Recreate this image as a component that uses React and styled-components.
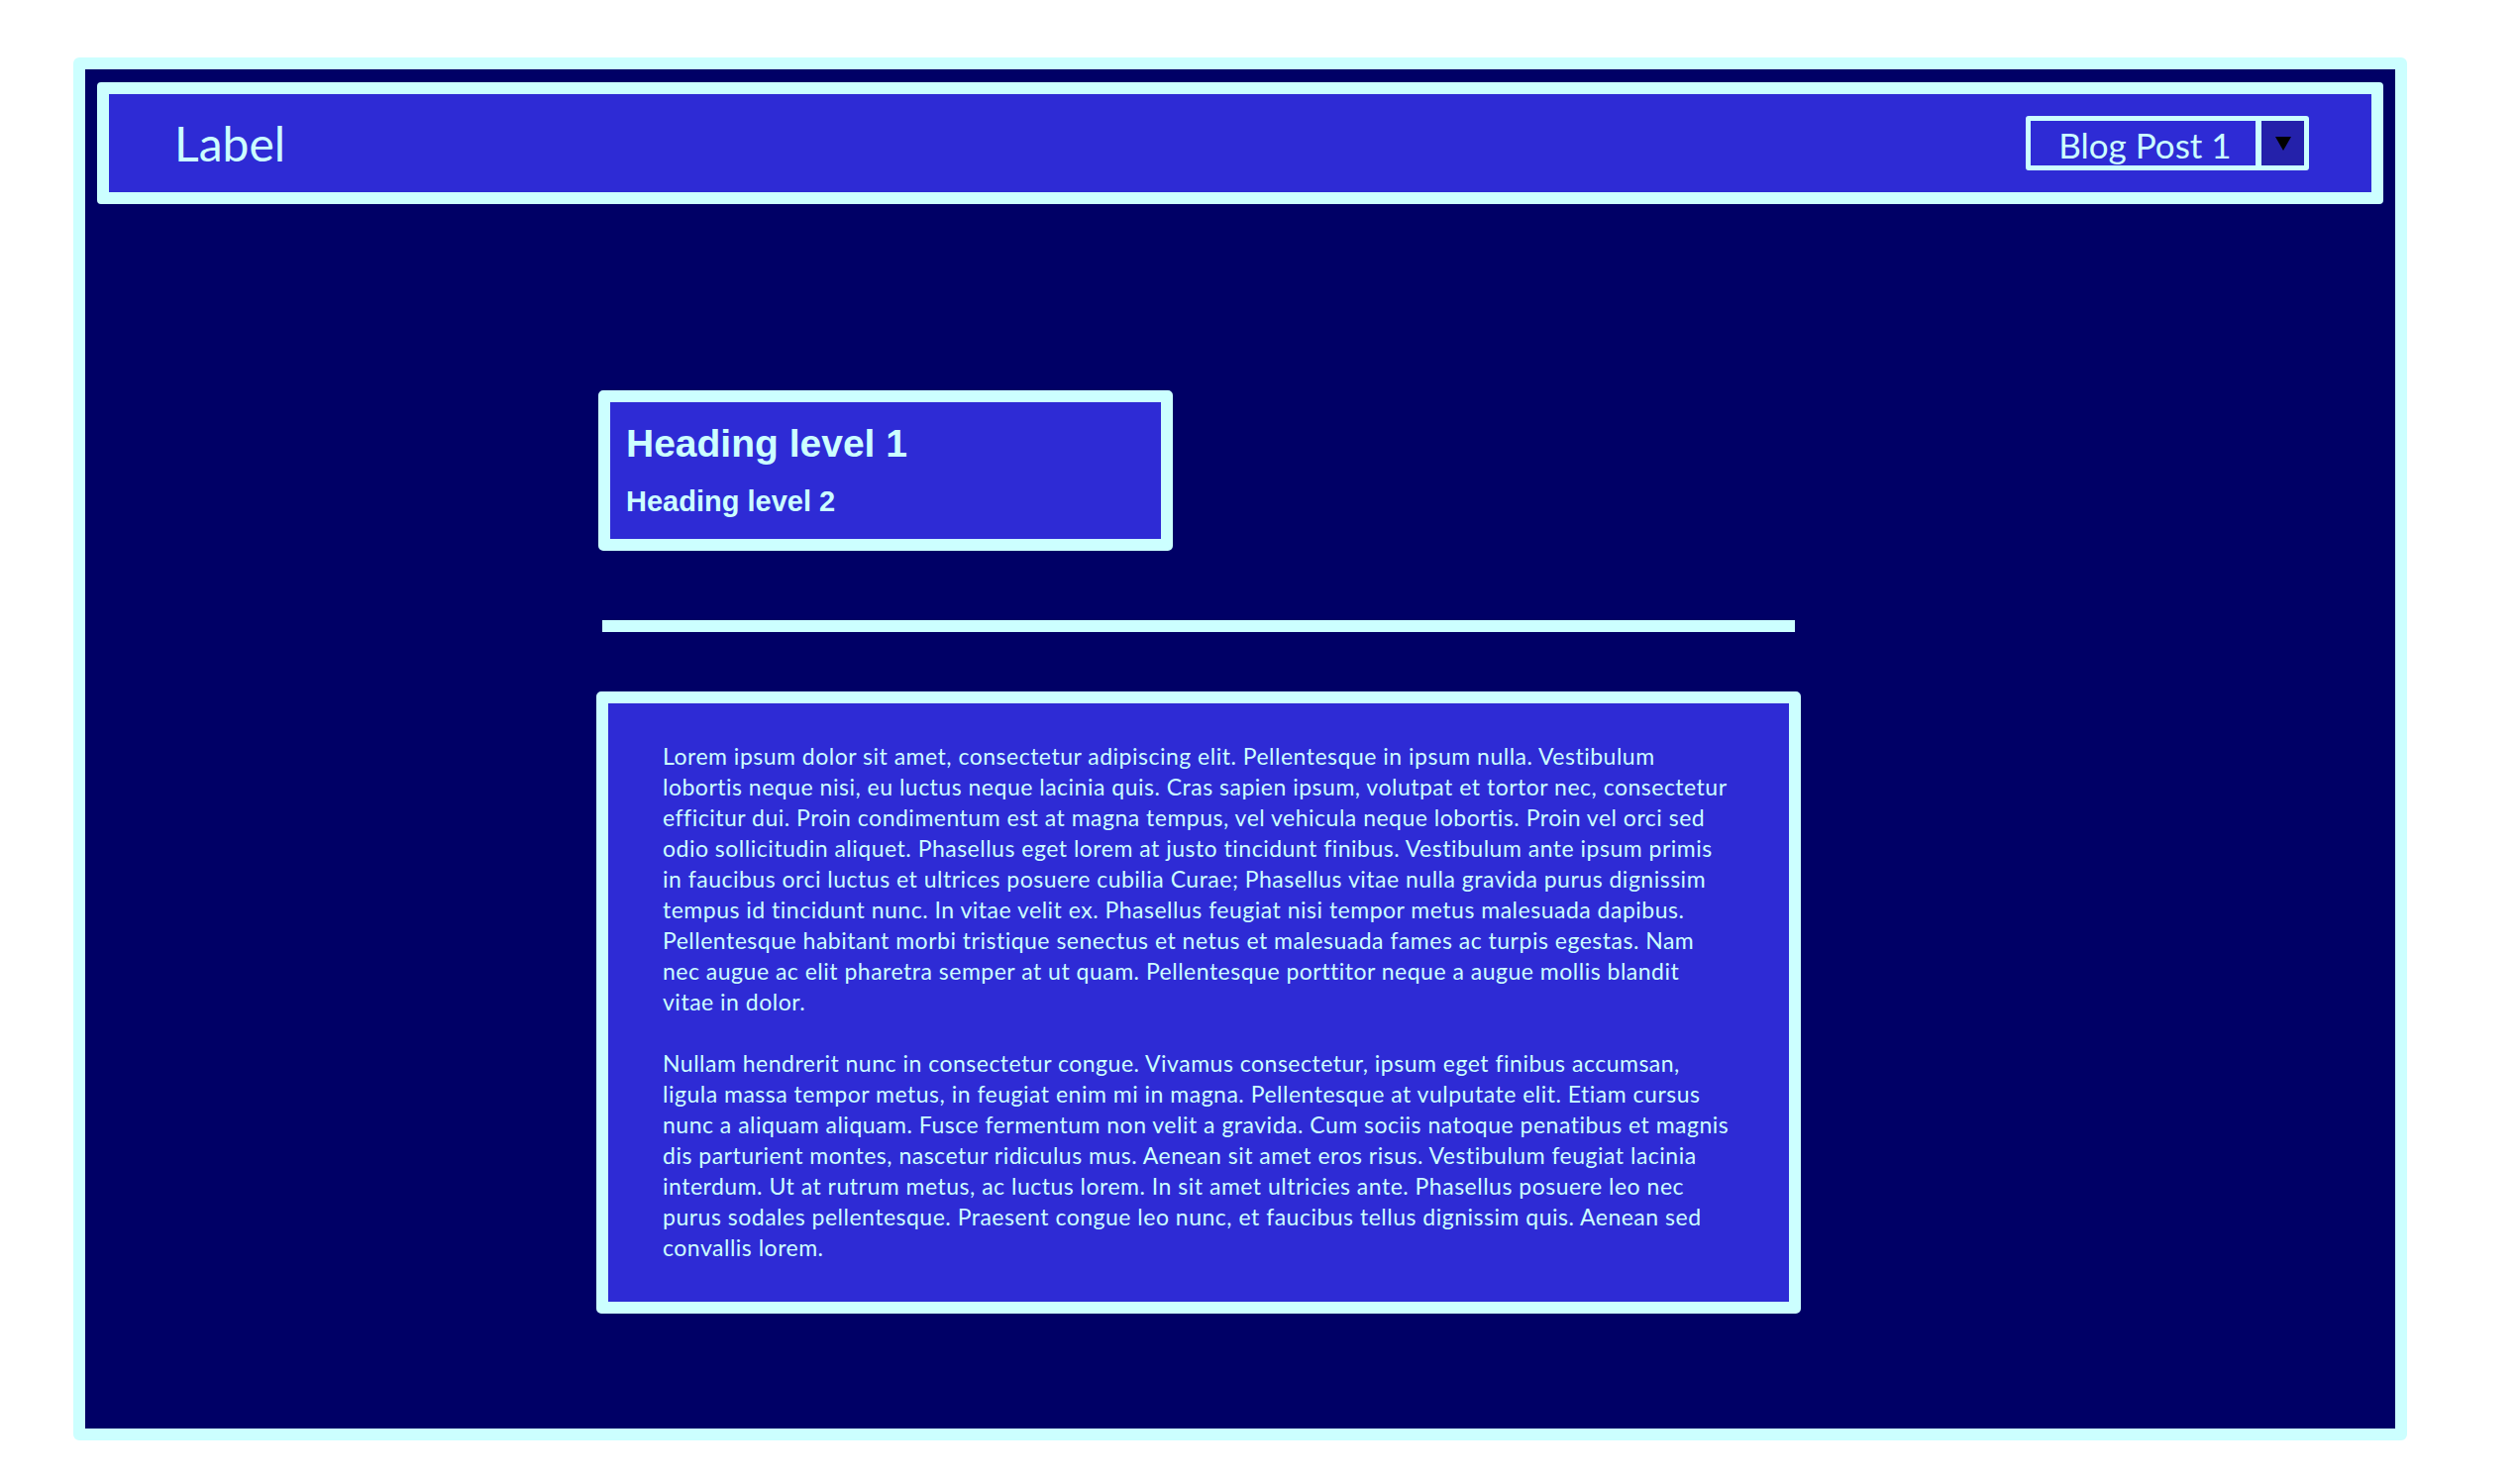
import React from 'react';
import styled, { createGlobalStyle } from 'styled-components';

const light = '#ccffff';
const navy = '#000066';
const blue = '#2e2bd5';

const GlobalStyle = createGlobalStyle`
  html, body {
    margin: 0;
    padding: 0;
    background: #ffffff;
  }
`;

const Page = styled.div`
  padding: 58px 114px 43px 74px;
`;

const Frame = styled.div`
  box-sizing: border-box;
  height: 1396px;
  border: 12px solid ${light};
  border-radius: 6px;
  background: ${navy};
  padding: 13px 12px 0 12px;
  display: flex;
  flex-direction: column;
`;

const Header = styled.header`
  box-sizing: border-box;
  height: 123px;
  border: 12px solid ${light};
  border-radius: 4px;
  background: ${blue};
  display: flex;
  align-items: center;
  justify-content: space-between;
  padding: 0 63px 0 66px;
`;

const Label = styled.div`
  font-family: Lato, 'Noto Sans', sans-serif;
  font-size: 48px;
  color: ${light};
  line-height: 1;
`;

const Dropdown = styled.div`
  box-sizing: border-box;
  width: 286px;
  height: 55px;
  border: 5px solid ${light};
  border-radius: 3px;
  display: flex;
`;

const SelectValue = styled.div`
  flex: 1;
  display: flex;
  align-items: center;
  justify-content: center;
  font-family: Lato, 'Noto Sans', sans-serif;
  font-size: 35px;
  color: ${light};
  padding: 2px 0 0 4px;
`;

const SelectButton = styled.div`
  width: 43px;
  border-left: 6px solid ${light};
  background: #2421aa;
  display: flex;
  align-items: center;
  justify-content: center;
`;

const Main = styled.main`
  margin-left: 504px;
  width: 1216px;
  display: flex;
  flex-direction: column;
`;

const TitleCard = styled.section`
  box-sizing: border-box;
  margin: 188px 0 0 2px;
  width: 580px;
  height: 162px;
  border: 12px solid ${light};
  border-radius: 5px;
  background: ${blue};
  padding: 18px 10px 0 16px;
  font-family: 'Liberation Sans', Arial, sans-serif;
  color: ${light};
`;

const H1 = styled.h1`
  margin: 0 0 16px;
  font-size: 39px;
  line-height: 48px;
  font-weight: 700;
`;

const H2 = styled.h2`
  margin: 0;
  font-size: 29px;
  line-height: 36px;
  font-weight: 700;
`;

const Rule = styled.hr`
  margin: 70px 0 0 6px;
  width: 1204px;
  height: 12px;
  border: none;
  background: ${light};
`;

const TextCard = styled.section`
  box-sizing: border-box;
  margin-top: 60px;
  width: 1216px;
  height: 628px;
  border: 12px solid ${light};
  border-radius: 5px;
  background: ${blue};
  padding: 38px 20px 0 55px;
`;

const Para = styled.p`
  margin: 0 0 31px;
  font-family: Lato, 'Noto Sans', sans-serif;
  font-size: 23px;
  line-height: 31px;
  letter-spacing: 0.5px;
  color: ${light};
  white-space: nowrap;
`;

const Arrow = () => (
  <svg width="16" height="14" viewBox="0 0 16 14">
    <polygon points="0,0 16,0 8,14" fill="#000" />
  </svg>
);

const paragraphs = [
  [
    'Lorem ipsum dolor sit amet, consectetur adipiscing elit. Pellentesque in ipsum nulla. Vestibulum',
    'lobortis neque nisi, eu luctus neque lacinia quis. Cras sapien ipsum, volutpat et tortor nec, consectetur',
    'efficitur dui. Proin condimentum est at magna tempus, vel vehicula neque lobortis. Proin vel orci sed',
    'odio sollicitudin aliquet. Phasellus eget lorem at justo tincidunt finibus. Vestibulum ante ipsum primis',
    'in faucibus orci luctus et ultrices posuere cubilia Curae; Phasellus vitae nulla gravida purus dignissim',
    'tempus id tincidunt nunc. In vitae velit ex. Phasellus feugiat nisi tempor metus malesuada dapibus.',
    'Pellentesque habitant morbi tristique senectus et netus et malesuada fames ac turpis egestas. Nam',
    'nec augue ac elit pharetra semper at ut quam. Pellentesque porttitor neque a augue mollis blandit',
    'vitae in dolor.',
  ],
  [
    'Nullam hendrerit nunc in consectetur congue. Vivamus consectetur, ipsum eget finibus accumsan,',
    'ligula massa tempor metus, in feugiat enim mi in magna. Pellentesque at vulputate elit. Etiam cursus',
    'nunc a aliquam aliquam. Fusce fermentum non velit a gravida. Cum sociis natoque penatibus et magnis',
    'dis parturient montes, nascetur ridiculus mus. Aenean sit amet eros risus. Vestibulum feugiat lacinia',
    'interdum. Ut at rutrum metus, ac luctus lorem. In sit amet ultricies ante. Phasellus posuere leo nec',
    'purus sodales pellentesque. Praesent congue leo nunc, et faucibus tellus dignissim quis. Aenean sed',
    'convallis lorem.',
  ],
];

export default function App() {
  return (
    <Page>
      <GlobalStyle />
      <Frame>
        <Header>
          <Label>Label</Label>
          <Dropdown>
            <SelectValue>Blog Post 1</SelectValue>
            <SelectButton>
              <Arrow />
            </SelectButton>
          </Dropdown>
        </Header>
        <Main>
          <TitleCard>
            <H1>Heading level 1</H1>
            <H2>Heading level 2</H2>
          </TitleCard>
          <Rule />
          <TextCard>
            {paragraphs.map((lines, i) => (
              <Para key={i}>
                {lines.map((line, j) => (
                  <React.Fragment key={j}>
                    {line}
                    {j < lines.length - 1 && <br />}
                  </React.Fragment>
                ))}
              </Para>
            ))}
          </TextCard>
        </Main>
      </Frame>
    </Page>
  );
}
